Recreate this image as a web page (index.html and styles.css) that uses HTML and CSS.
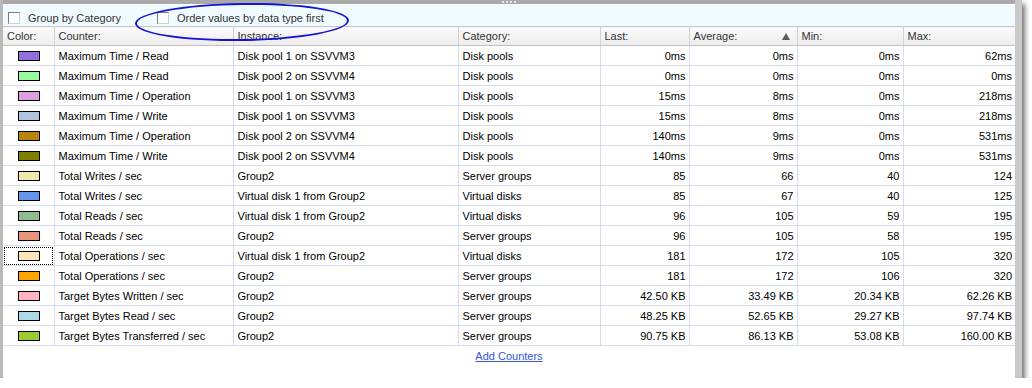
FILE: index.html
```html
<!DOCTYPE html>
<html lang="en">
<head>
  <meta charset="UTF-8" />
  <title>Counters</title>
  <link rel="stylesheet" href="styles.css">
</head>
<body>
  <div class="window">
    <div class="splitter"><span class="grip"></span></div>

    <div class="toolbar">
      <label class="option first"><span class="box"></span>Group by Category</label>
      <label class="option"><span class="box"></span>Order values by data type first</label>
    </div>

    <table class="grid">
      <colgroup>
        <col style="width:51px"><col style="width:179px"><col style="width:225px"><col style="width:142px">
        <col style="width:89px"><col style="width:108px"><col style="width:106px"><col style="width:112px">
      </colgroup>
      <thead>
        <tr>
          <th>Color:</th><th>Counter:</th><th>Instance:</th><th>Category:</th>
          <th>Last:</th><th class="sorted">Average:<span class="arrow"></span></th><th>Min:</th><th class="last">Max:</th>
        </tr>
      </thead>
      <tbody id="rows"></tbody>
    </table>

    <div class="footer"><a href="#">Add Counters</a></div>

    <div class="highlight"></div>
  </div>

  <script>
    const rows = [
      ["#9370db", "Maximum Time / Read", "Disk pool 1 on SSVVM3", "Disk pools", "0ms", "0ms", "0ms", "62ms"],
      ["#98fb98", "Maximum Time / Read", "Disk pool 2 on SSVVM4", "Disk pools", "0ms", "0ms", "0ms", "0ms"],
      ["#dda0dd", "Maximum Time / Operation", "Disk pool 1 on SSVVM3", "Disk pools", "15ms", "8ms", "0ms", "218ms"],
      ["#b0c4de", "Maximum Time / Write", "Disk pool 1 on SSVVM3", "Disk pools", "15ms", "8ms", "0ms", "218ms"],
      ["#b8860b", "Maximum Time / Operation", "Disk pool 2 on SSVVM4", "Disk pools", "140ms", "9ms", "0ms", "531ms"],
      ["#808000", "Maximum Time / Write", "Disk pool 2 on SSVVM4", "Disk pools", "140ms", "9ms", "0ms", "531ms"],
      ["#eee8aa", "Total Writes / sec", "Group2", "Server groups", "85", "66", "40", "124"],
      ["#6495ed", "Total Writes / sec", "Virtual disk 1 from Group2", "Virtual disks", "85", "67", "40", "125"],
      ["#8fbc8f", "Total Reads / sec", "Virtual disk 1 from Group2", "Virtual disks", "96", "105", "59", "195"],
      ["#e9967a", "Total Reads / sec", "Group2", "Server groups", "96", "105", "58", "195"],
      ["#ffe4b5", "Total Operations / sec", "Virtual disk 1 from Group2", "Virtual disks", "181", "172", "105", "320"],
      ["#ffa500", "Total Operations / sec", "Group2", "Server groups", "181", "172", "106", "320"],
      ["#ffb6c1", "Target Bytes Written / sec", "Group2", "Server groups", "42.50 KB", "33.49 KB", "20.34 KB", "62.26 KB"],
      ["#add8e6", "Target Bytes Read / sec", "Group2", "Server groups", "48.25 KB", "52.65 KB", "29.27 KB", "97.74 KB"],
      ["#9acd32", "Target Bytes Transferred / sec", "Group2", "Server groups", "90.75 KB", "86.13 KB", "53.08 KB", "160.00 KB"]
    ];

    const body = document.getElementById("rows");
    rows.forEach((r, i) => {
      const tr = document.createElement("tr");
      const swatchCell = document.createElement("td");
      swatchCell.className = i === 10 ? "swatch focused" : "swatch";
      swatchCell.innerHTML = '<span class="chip" style="background:' + r[0] + '"></span>';
      tr.appendChild(swatchCell);
      for (let c = 1; c < r.length; c++) {
        const td = document.createElement("td");
        td.textContent = r[c];
        if (c >= 4) td.className = "num";
        tr.appendChild(td);
      }
      body.appendChild(tr);
    });
  </script>
</body>
</html>
```

FILE: styles.css
```css
body {
  margin: 0;
  background: #ffffff;
  font-family: "Liberation Sans", Arial, sans-serif;
  font-size: 11px;
  color: #000;
}

.window {
  position: relative;
  width: 1012px;
  height: 378px;
  border-left: 3px solid #b9b9b9;
  border-right: 7px solid #c9c9c9;
  background: #fff;
  box-shadow: 3px 4px 5px rgba(0, 0, 0, 0.55);
}

.splitter {
  height: 4px;
  background: #a9a9a9;
  border-bottom: 1px solid #fff;
  display: flex;
  justify-content: center;
}

.grip {
  width: 14px;
  height: 2px;
  margin-top: 1px;
  background: repeating-linear-gradient(90deg, #e8e8e8 0 2px, transparent 2px 4px);
}

.toolbar {
  box-sizing: border-box;
  height: 21px;
  padding: 4px 0 0 5px;
  background: #f0fbff;
  display: flex;
  align-items: center;
}

.option {
  display: flex;
  align-items: center;
  color: #333;
  white-space: nowrap;
}

.option.first {
  width: 149px;
}

.box {
  width: 10px;
  height: 10px;
  margin-right: 8px;
  background: #fff;
  border: 1px solid;
  border-color: #7a7a7a #d0d0d0 #d0d0d0 #7a7a7a;
}

/* hand-drawn ring round the second option */
.highlight {
  position: absolute;
  left: 132px;
  top: 3px;
  width: 214px;
  height: 38px;
  box-sizing: border-box;
  border: 2.5px solid #1414d2;
  border-radius: 50%;
  transform: rotate(-0.8deg);
  z-index: 5;
}

.grid {
  width: 1012px;
  table-layout: fixed;
  border-collapse: collapse;
}

.grid th {
  height: 18px;
  padding: 0 0 0 4px;
  text-align: left;
  font-weight: normal;
  color: #333;
  background: linear-gradient(#fbfbfb, #ececec);
  border: 1px solid #d2d2d2;
  border-top-color: #c8c8c8;
  border-bottom-color: #c2c2c2;
  white-space: nowrap;
}

.grid th:first-child {
  border-left: none;
}

.grid th.last {
  border-right: none;
}

.grid th.sorted {
  position: relative;
}

.arrow {
  position: absolute;
  right: 7px;
  top: 6px;
  width: 0;
  height: 0;
  border-left: 4px solid transparent;
  border-right: 4px solid transparent;
  border-bottom: 7px solid #5a5a5a;
}

.grid td {
  height: 19px;
  padding: 0 0 0 4px;
  border: 1px solid #d9dcee;
  white-space: nowrap;
  overflow: hidden;
}

.grid td:first-child {
  border-left: none;
}

.grid td:last-child {
  border-right: none;
}

.grid td.num {
  text-align: right;
  padding: 0 3px 0 0;
}

.grid td.swatch {
  padding: 0 0 0 15px;
  line-height: 0;
}

.grid td.focused {
  outline: 1px dotted #000;
  outline-offset: -2px;
}

.chip {
  display: inline-block;
  width: 20px;
  height: 8px;
  border: 1px solid #000;
}

.footer {
  text-align: center;
  padding-top: 4px;
}

.footer a {
  color: #3355dd;
  text-decoration: underline;
}
```
